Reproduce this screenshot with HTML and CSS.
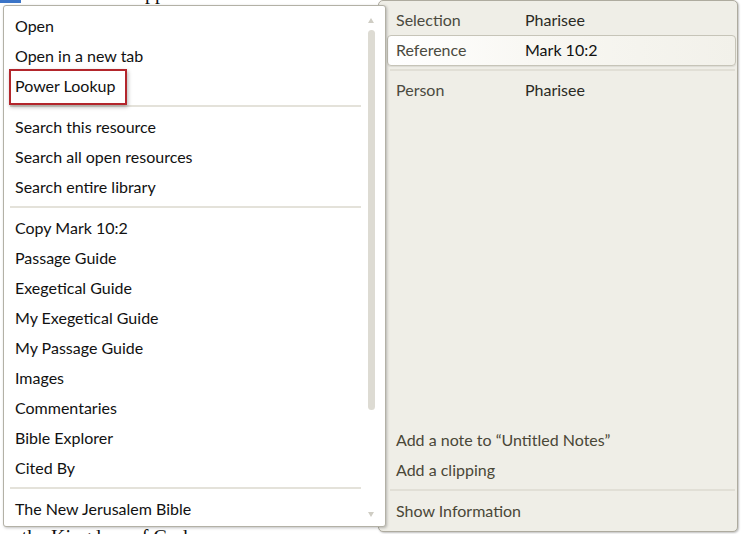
FILE: index.html
```html
<!DOCTYPE html>
<html>
<head>
<meta charset="utf-8">
<link rel="stylesheet" href="styles.css">
</head>
<body>
<div class="stage">
  <div class="doc">
    <p class="doc-line top"><span class="hl">Ph</span> the Pharisees appeared</p>
    <p class="doc-line bottom">or the Kingdom of God</p>
  </div>

  <div class="panel">
    <div class="props">
      <div class="prop"><span class="k">Selection</span><span class="v">Pharisee</span></div>
      <div class="prop current"><span class="k">Reference</span><span class="v strong">Mark 10:2</span></div>
      <div class="rule"></div>
      <div class="prop"><span class="k">Person</span><span class="v">Pharisee</span></div>
    </div>
    <div class="actions">
      <div class="act">Add a note to “Untitled Notes”</div>
      <div class="act">Add a clipping</div>
      <div class="rule"></div>
      <div class="act">Show Information</div>
    </div>
  </div>

  <div class="menu">
    <div class="items">
      <div class="item">Open</div>
      <div class="item">Open in a new tab</div>
      <div class="item"><span class="focus">Power Lookup</span></div>
      <div class="sep"></div>
      <div class="item">Search this resource</div>
      <div class="item">Search all open resources</div>
      <div class="item">Search entire library</div>
      <div class="sep"></div>
      <div class="item">Copy Mark 10:2</div>
      <div class="item">Passage Guide</div>
      <div class="item">Exegetical Guide</div>
      <div class="item">My Exegetical Guide</div>
      <div class="item">My Passage Guide</div>
      <div class="item">Images</div>
      <div class="item">Commentaries</div>
      <div class="item">Bible Explorer</div>
      <div class="item">Cited By</div>
      <div class="sep"></div>
      <div class="item">The New Jerusalem Bible</div>
    </div>
    <div class="scroll">
      <span class="arrow up"></span>
      <span class="thumb"></span>
      <span class="arrow down"></span>
    </div>
  </div>
</div>
</body>
</html>
```

FILE: styles.css
```css
* { box-sizing: border-box; }

html, body {
  margin: 0;
  padding: 0;
  background: #ffffff;
}

body {
  font-family: Lato, "Open Sans", sans-serif;
  font-size: 16px;
  color: #151515;
}

.stage {
  position: relative;
  width: 742px;
  height: 534px;
  overflow: hidden;
}

/* document underneath the popups */
.doc {
  height: 534px;
  display: flex;
  flex-direction: column;
  justify-content: space-between;
  font-family: "Liberation Serif", serif;
  font-size: 20px;
  color: #111;
}

.doc-line {
  margin: 0;
  white-space: nowrap;
  line-height: 22px;
}

.doc-line.top {
  margin-top: -19px;
}

.doc-line.bottom {
  margin-bottom: -14px;
}

.hl {
  background: #3b74c7;
  color: #fff;
}

/* right info panel */
.panel {
  position: absolute;
  left: 378px;
  top: 0;
  width: 360px;
  height: 532px;
  background: #efeee7;
  border: 1px solid #aeab9f;
  border-radius: 5px;
  box-shadow: 1px 1px 2px rgba(0, 0, 0, 0.25);
  display: flex;
  flex-direction: column;
  justify-content: space-between;
  padding: 5px 0 5px 0;
}

.prop {
  display: flex;
  align-items: center;
  height: 29px;
  padding-left: 17px;
  padding-bottom: 2px;
}

.prop .k {
  width: 129px;
  color: #4b4a3f;
}

.prop .v {
  color: #2a2a24;
}

.prop .v.strong {
  color: #111;
}

.prop.current {
  height: 31px;
  margin: 0 1px 0 8px;
  padding-left: 8px;
  border: 1px solid #c6c4b8;
  border-radius: 4px;
  background: linear-gradient(to right, #ffffff 0%, #f8f7f2 45%, #f2f1ea 100%);
  box-shadow: 0 1px 1px rgba(0, 0, 0, 0.08);
}

.props .prop:last-child {
  height: 30px;
}

.rule {
  height: 2px;
  background: #e1dfd6;
  margin: 3px 2px 4px 11px;
}

.actions .rule {
  margin: 4px 2px 5px 11px;
}

.act {
  height: 30px;
  display: flex;
  align-items: center;
  padding-left: 17px;
  padding-bottom: 2px;
  color: #4a4737;
}

/* context menu */
.menu {
  position: absolute;
  left: 3px;
  top: 5px;
  width: 383px;
  height: 522px;
  background: #ffffff;
  border: 1px solid #b3b1a6;
  border-radius: 3px;
  box-shadow: 1px 1px 3px rgba(0, 0, 0, 0.25);
  display: flex;
}

.items {
  width: 360px;
  padding-top: 5px;
  display: flex;
  flex-direction: column;
}

.item {
  height: 30px;
  display: flex;
  align-items: center;
  padding-left: 11px;
  padding-bottom: 2px;
  color: #111;
  white-space: nowrap;
}

.focus {
  position: relative;
}

.focus::before {
  content: "";
  position: absolute;
  left: -6px;
  top: -7px;
  width: 114px;
  height: 32px;
  border: 2px solid #b3262c;
  box-shadow: 1px 2px 4px rgba(0, 0, 0, 0.3);
}

.sep {
  height: 2px;
  background: #e4e2da;
  margin: 4px 3px 5px 6px;
}

.scroll {
  flex: 1;
  display: flex;
  flex-direction: column;
  align-items: flex-start;
  padding: 12px 0 9px 4px;
}

.thumb {
  display: block;
  width: 7px;
  height: 380px;
  margin-top: 7px;
  background: #dddbd3;
  border-radius: 4px;
}

.arrow {
  display: block;
  width: 0;
  height: 0;
  border-left: 3.5px solid transparent;
  border-right: 3.5px solid transparent;
}

.arrow.up {
  border-bottom: 5px solid #cfcdc4;
}

.arrow.down {
  margin-top: auto;
  border-top: 5px solid #cfcdc4;
}
```
